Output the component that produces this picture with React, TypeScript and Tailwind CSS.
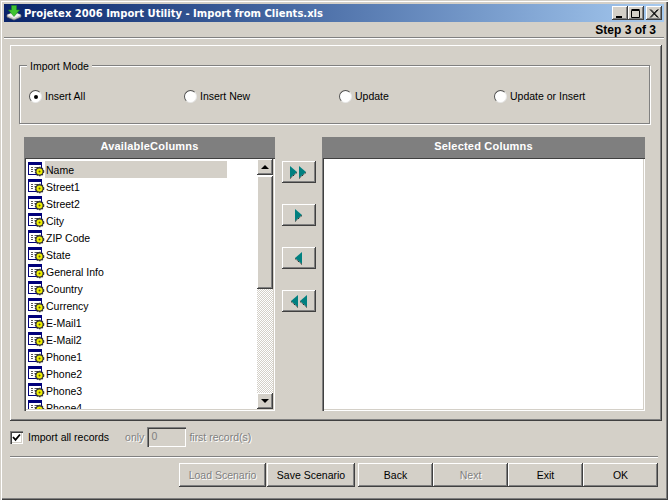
const face = "bg-[#d4d0c8]";
const raised = "shadow-[inset_-1px_-1px_0_#404040,inset_1px_1px_0_#fff,inset_-2px_-2px_0_#808080]";
const sunken = "shadow-[inset_1px_1px_0_#808080,inset_2px_2px_0_#404040,inset_-1px_-1px_0_#fff,inset_-2px_-2px_0_#d4d0c8]";

const columns = ["Name", "Street1", "Street2", "City", "ZIP Code", "State", "General Info", "Country", "Currency", "E-Mail1", "E-Mail2", "Phone1", "Phone2", "Phone3", "Phone4"];

function AppIcon() {
  return (
    <svg width="16" height="16" viewBox="0 0 16 16" className="shrink-0">
      <path d="M1 10 L8 7 L15 10 L15 12 L8 15 L1 12 Z" fill="#c8c8c8" stroke="#6b6b6b" strokeWidth="0.7" />
      <path d="M1 10 L8 13 L15 10 L8 7 Z" fill="#f2f2f2" />
      <path d="M5.5 0.5 H10.5 V5 H13.5 L8 11.5 L2.5 5 H5.5 Z" fill="#3fc32f" stroke="#1e8a1e" strokeWidth="0.6" />
    </svg>
  );
}

function FieldIcon() {
  return (
    <svg width="17" height="17" viewBox="0 0 17 17" className="shrink-0">
      <rect x="0.5" y="1.5" width="13" height="12" fill="#fff" stroke="#00007b" />
      <rect x="1" y="2" width="12" height="2" fill="#00007b" />
      <path d="M3 6.5 H5 M6.5 6.5 H11 M3 8.5 H5 M6.5 8.5 H8 M3 10.5 H5" stroke="#555" strokeWidth="1" />
      <circle cx="11.5" cy="10.5" r="4.2" fill="#333" strokeDasharray="1.5 1.2" stroke="#333" strokeWidth="1.2" />
      <circle cx="11.5" cy="10.5" r="3" fill="#f0f000" />
      <circle cx="11.5" cy="10.5" r="1" fill="#5a5a00" />
    </svg>
  );
}

function WinButton({ kind }: { kind: string }) {
  return (
    <div className={`w-4 h-[14px] ${face} ${raised} flex items-center justify-center`}>
      <svg width="10" height="9" viewBox="0 0 10 9">
        {kind === "min" && <rect x="1" y="7" width="6" height="2" fill="#000" />}
        {kind === "max" && <path d="M0.5 1.5 H8.5 V8.5 H0.5 Z M0.5 0.5 H8.5" fill="none" stroke="#000" />}
        {kind === "close" && <path d="M1 0.5 L8.5 8.5 M2 0.5 L9.5 8.5 M8.5 0.5 L1 8.5 M9.5 0.5 L2 8.5" stroke="#000" strokeWidth="0.9" />}
      </svg>
    </div>
  );
}

function Radio({ label, on, className }: { label: string; on?: boolean; className: string }) {
  return (
    <div className={`flex items-center gap-[3px] ${className}`}>
      <div className="w-[13px] h-[13px] rounded-full bg-white border border-t-[#505050] border-l-[#505050] border-r-[#e8e8e8] border-b-[#e8e8e8] flex items-center justify-center">
        {on && <div className="w-1 h-1 rounded-full bg-black" />}
      </div>
      <span>{label}</span>
    </div>
  );
}

function Arrow({ x, left }: { x: number; left?: boolean }) {
  const tip = left ? x - 7 : x + 7;
  return (
    <>
      <path d={`M${x} 0 L${tip} 6 L${x} 12 Z`} fill="#008080" />
      <path d={`M${x} 12.5 L${tip} 6.5`} stroke="#000" strokeDasharray="1 1" fill="none" />
    </>
  );
}

function MoveButton({ dir, count }: { dir: "right" | "left"; count: number }) {
  const w = count === 2 ? 18 : 8;
  return (
    <button className={`w-[34px] h-[22px] ${face} ${raised} flex items-center justify-center`}>
      <svg width={w} height="13" viewBox={`0 0 ${w} 13`}>
        {dir === "right" ? (
          <>
            <Arrow x={0} />
            {count === 2 && <Arrow x={9} />}
          </>
        ) : (
          <>
            <Arrow x={w - 1} left />
            {count === 2 && <Arrow x={8} left />}
          </>
        )}
      </svg>
    </button>
  );
}

function ScrollButton({ up }: { up?: boolean }) {
  return (
    <div className={`h-4 shrink-0 ${face} ${raised} flex items-center justify-center`}>
      <svg width="8" height="4" viewBox="0 0 8 4">
        <path d={up ? "M4 0 L8 4 H0 Z" : "M0 0 H8 L4 4 Z"} fill="#000" />
      </svg>
    </div>
  );
}

function Header({ children }: { children: string }) {
  return <div className="h-5 bg-[#7f7f7f] text-white font-bold text-[11px] text-center leading-[19px] tracking-[0.2px]">{children}</div>;
}

function FooterButton({ label, width, disabled }: { label: string; width: string; disabled?: boolean }) {
  return (
    <button className={`${width} h-6 pt-[1px] ${face} ${raised} ${disabled ? "text-[#808080] [text-shadow:1px_1px_0_#fff]" : "text-black"}`}>
      {label}
    </button>
  );
}

export default function App() {
  return (
    <div className={`w-[668px] h-[500px] overflow-hidden ${face} p-1 text-[10.5px] text-black font-['Liberation_Sans',sans-serif] shadow-[inset_1px_1px_0_#d4d0c8,inset_2px_2px_0_#fff,inset_-1px_-1px_0_#404040,inset_-2px_-2px_0_#808080]`}>
      {/* title bar */}
      <div className="h-[18px] bg-gradient-to-r from-[#0a246a] to-[#a6caf0] flex items-center pl-[2px] pr-[2px]">
        <AppIcon />
        <span className="ml-[2px] text-white font-bold text-[10px] font-['DejaVu_Sans',sans-serif] whitespace-nowrap">Projetex 2006 Import Utility - Import from Clients.xls</span>
        <div className="ml-auto flex">
          <WinButton kind="min" />
          <WinButton kind="max" />
          <div className="ml-[2px]"><WinButton kind="close" /></div>
        </div>
      </div>

      <div className="h-[15px] flex items-center justify-end pr-2 font-bold text-[12px]">Step 3 of 3</div>
      <div className="h-[2px] border-t border-[#808080] bg-white" />

      {/* main panel */}
      <div className={`mt-[6px] ml-[6px] w-[652px] h-[376px] pl-[9px] pt-[20px] ${raised}`}>
        <div className="relative w-[631px] h-[59px] border border-[#808080] shadow-[1px_1px_0_#fff,inset_1px_1px_0_#fff] flex items-start pt-[23px] pl-[9px]">
          <span className={`absolute -top-[7px] left-[7px] px-[3px] ${face}`}>Import Mode</span>
          <Radio label="Insert All" on className="w-[155px]" />
          <Radio label="Insert New" className="w-[155px]" />
          <Radio label="Update" className="w-[155px]" />
          <Radio label="Update or Insert" className="w-[155px]" />
        </div>

        <div className="mt-[13px] ml-[5px] flex">
          <div className="w-[251px]">
            <Header>AvailableColumns</Header>
            <div className={`h-[254px] bg-white p-[2px] flex ${sunken}`}>
              <div className="flex-1 overflow-hidden pt-[2px] pl-[2px]">
                {columns.map((c, i) => (
                  <div key={c} className="flex h-[17px] items-center">
                    <FieldIcon />
                    <span className={`h-[17px] leading-[18px] pl-[1px] w-[182px] ${i === 0 ? face : ""}`}>{c}</span>
                  </div>
                ))}
              </div>
              <div className="w-4 flex flex-col">
                <ScrollButton up />
                <div className={`mt-[1px] h-[113px] ${face} ${raised}`} />
                <div className="flex-1 bg-[repeating-conic-gradient(#d4d0c8_0_25%,#fff_0_50%)] bg-[length:2px_2px]" />
                <ScrollButton />
              </div>
            </div>
          </div>

          <div className="w-[34px] ml-[7px] pt-6 flex flex-col gap-[21px]">
            <MoveButton dir="right" count={2} />
            <MoveButton dir="right" count={1} />
            <MoveButton dir="left" count={1} />
            <MoveButton dir="left" count={2} />
          </div>

          <div className="w-[323px] ml-[6px]">
            <Header>Selected Columns</Header>
            <div className={`h-[254px] bg-white ${sunken}`} />
          </div>
        </div>
      </div>

      {/* import options */}
      <div className="mt-[6px] ml-[6px] h-5 flex items-center">
        <div className={`w-[13px] h-[13px] bg-white flex items-center justify-center ${sunken}`}>
          <svg width="9" height="9" viewBox="0 0 9 9">
            <path d="M1 4 L3.5 6.8 L8 1.5" fill="none" stroke="#000" strokeWidth="1.8" />
          </svg>
        </div>
        <span className="ml-[5px] pt-[1px]">Import all records</span>
        <span className="ml-[16px] pt-[1px] text-[#808080] [text-shadow:1px_1px_0_#fff]">only</span>
        <div className={`ml-[3px] w-[39px] h-5 ${face} pl-[4px] leading-[18px] text-[#808080] ${sunken}`}>0</div>
        <span className="ml-[3px] pt-[1px] text-[#808080] [text-shadow:1px_1px_0_#fff]">first record(s)</span>
      </div>

      <div className="mt-[9px] ml-[6px] w-[648px] h-[2px] border-t border-[#808080] bg-white" />

      {/* footer buttons */}
      <div className="mt-[5px] ml-[175px] flex">
        <FooterButton label="Load Scenario" width="w-[87px]" disabled />
        <FooterButton label="Save Scenario" width="w-[88px] ml-[1px]" />
        <FooterButton label="Back" width="w-[75px] ml-[3px]" />
        <FooterButton label="Next" width="w-[75px]" disabled />
        <FooterButton label="Exit" width="w-[75px]" />
        <FooterButton label="OK" width="w-[75px]" />
      </div>
    </div>
  );
}
